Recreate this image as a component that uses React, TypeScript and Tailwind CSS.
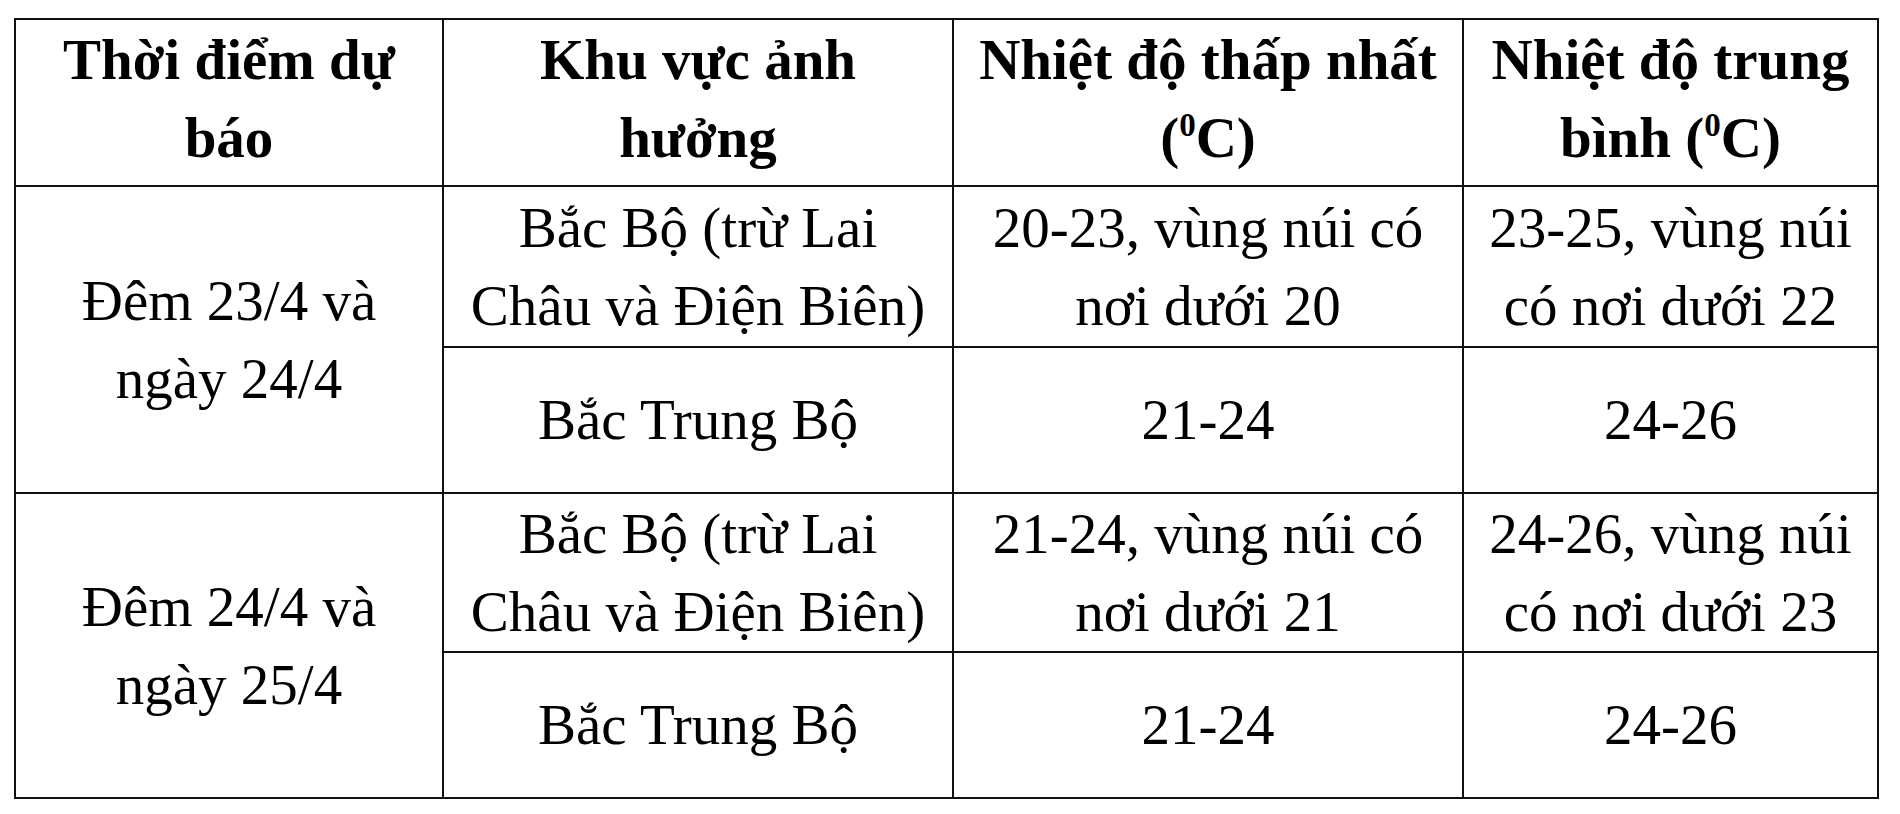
import React from "react";

const cell = "border-2 border-[#111] px-3 text-center align-middle";

function App(): JSX.Element {
  return (
    <div
      className="w-[1900px] h-[814px] bg-white text-black text-[57px] leading-[78px] pl-[14px] pt-[18px]"
      style={{ fontFamily: '"Liberation Serif", "Times New Roman", serif' }}
    >
      <table className="table-fixed border-collapse">
        <colgroup>
          <col className="w-[428px]" />
          <col className="w-[510px]" />
          <col className="w-[510px]" />
          <col className="w-[415px]" />
        </colgroup>
        <thead>
          <tr className="h-[167px] font-bold">
            <th className={`${cell} pb-[7px]`}>
              Thời điểm dự
              <br />
              báo
            </th>
            <th className={`${cell} pb-[7px]`}>
              Khu vực ảnh
              <br />
              hưởng
            </th>
            <th className={`${cell} pb-[7px]`}>
              Nhiệt độ thấp nhất
              <br />
              (<sup className="text-[0.58em] -top-[0.65em]">0</sup>C)
            </th>
            <th className={`${cell} pb-[7px]`}>
              Nhiệt độ trung
              <br />
              bình (<sup className="text-[0.58em] -top-[0.65em]">0</sup>C)
            </th>
          </tr>
        </thead>
        <tbody>
          <tr className="h-[161px]">
            <td className={cell} rowSpan={2}>
              Đêm 23/4 và
              <br />
              ngày 24/4
            </td>
            <td className={cell}>
              Bắc Bộ (trừ Lai
              <br />
              Châu và Điện Biên)
            </td>
            <td className={cell}>
              20-23, vùng núi có
              <br />
              nơi dưới 20
            </td>
            <td className={cell}>
              23-25, vùng núi
              <br />
              có nơi dưới 22
            </td>
          </tr>
          <tr className="h-[146px]">
            <td className={cell}>Bắc Trung Bộ</td>
            <td className={cell}>21-24</td>
            <td className={cell}>24-26</td>
          </tr>
          <tr className="h-[159px]">
            <td className={cell} rowSpan={2}>
              Đêm 24/4 và
              <br />
              ngày 25/4
            </td>
            <td className={cell}>
              Bắc Bộ (trừ Lai
              <br />
              Châu và Điện Biên)
            </td>
            <td className={cell}>
              21-24, vùng núi có
              <br />
              nơi dưới 21
            </td>
            <td className={cell}>
              24-26, vùng núi
              <br />
              có nơi dưới 23
            </td>
          </tr>
          <tr className="h-[146px]">
            <td className={cell}>Bắc Trung Bộ</td>
            <td className={cell}>21-24</td>
            <td className={cell}>24-26</td>
          </tr>
        </tbody>
      </table>
    </div>
  );
}

export default App;
